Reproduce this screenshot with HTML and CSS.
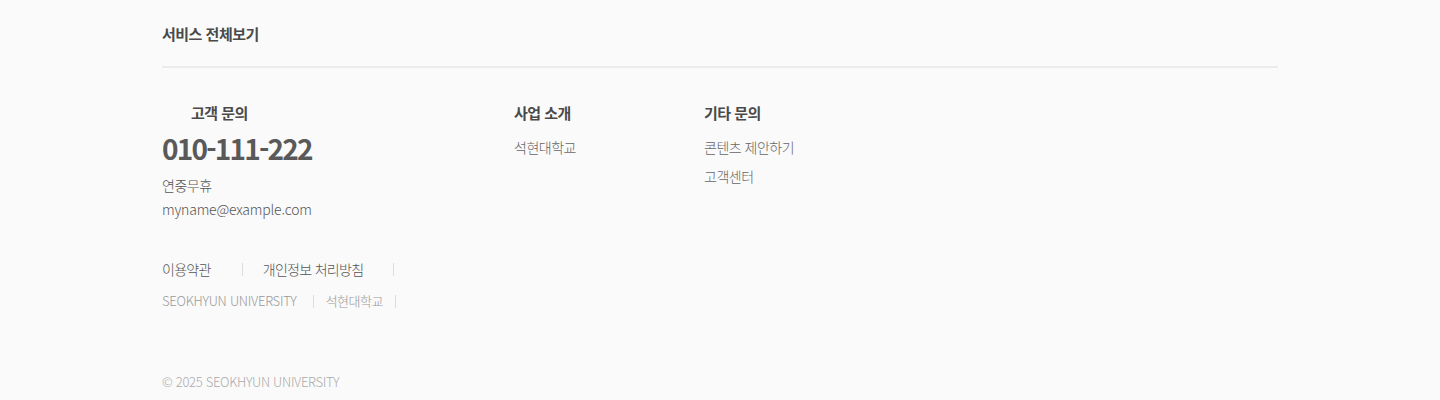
FILE: index.html
```html
<!DOCTYPE html>
<html lang="ko">
<head>
<meta charset="utf-8">
<title>Footer</title>
<link rel="stylesheet" href="styles.css">
</head>
<body>
<footer class="footer">
  <div class="top">
    <h2 class="top-title">서비스 전체보기</h2>
  </div>
  <div class="cols">
    <div class="col col-contact">
      <h3 class="col-title indent">고객 문의</h3>
      <div class="phone">010-111-222</div>
      <p class="info first">연중무휴</p>
      <p class="info email">myname@example.com</p>
    </div>
    <div class="col col-biz">
      <h3 class="col-title">사업 소개</h3>
      <ul class="links">
        <li>석현대학교</li>
      </ul>
    </div>
    <div class="col col-etc">
      <h3 class="col-title">기타 문의</h3>
      <ul class="links">
        <li>콘텐츠 제안하기</li>
        <li>고객센터</li>
      </ul>
    </div>
  </div>
  <ul class="policy">
    <li class="policy-item p1">이용약관</li>
    <li class="policy-item p2">개인정보 처리방침</li>
  </ul>
  <ul class="family">
    <li class="family-item f1">SEOKHYUN UNIVERSITY</li>
    <li class="family-item f2">석현대학교</li>
  </ul>
  <p class="copy">© 2025 SEOKHYUN UNIVERSITY</p>
</footer>
</body>
</html>
```

FILE: styles.css
```css
* { box-sizing: border-box; }
html, body {
  margin: 0;
  padding: 0;
  background: #fafafa;
  font-family: "Noto Sans CJK KR", "Noto Sans", sans-serif;
  color: #666;
  letter-spacing: -0.5px;
  font-weight: 300;
}
ul { list-style: none; margin: 0; padding: 0; }
p, h2, h3 { margin: 0; }

.footer {
  width: 1116px;
  margin: 0 auto;
}

.top {
  padding-top: 24px;
  padding-bottom: 22px;
  border-bottom: 2px solid #ebebeb;
}
.top-title {
  font-size: 15px;
  line-height: 20px;
  font-weight: 700;
  color: #4a4a4a;
}

.cols {
  display: flex;
  margin-top: 35px;
}
.col-contact { width: 352px; }
.col-biz { width: 190px; }

.col-title {
  font-size: 15px;
  line-height: 20px;
  font-weight: 700;
  color: #4a4a4a;
}
.col-title.indent { padding-left: 29px; }

.phone {
  margin-top: 7px;
  font-size: 28px;
  line-height: 36px;
  font-weight: 700;
  color: #595959;
  letter-spacing: -1.8px;
}
.info {
  font-size: 14px;
  line-height: 24px;
  color: #555;
}
.info.first { margin-top: 7px; }
.info.email { letter-spacing: -0.2px; }

.links {
  margin-top: 14px;
  display: flex;
  flex-direction: column;
  gap: 9px;
}
.links li {
  font-size: 14px;
  line-height: 20px;
  color: #666;
}

.policy {
  display: flex;
  align-items: center;
  margin-top: 38px;
}
.policy-item {
  font-size: 14px;
  line-height: 20px;
  color: #555;
  display: flex;
  align-items: center;
  letter-spacing: -0.7px;
}
.policy-item::after {
  content: "";
  display: block;
  width: 1px;
  height: 13px;
  background: #ddd;
}
.policy-item.p1::after { margin-left: 31px; margin-right: 20px; }
.policy-item.p2::after { margin-left: 30px; }

.family {
  display: flex;
  align-items: center;
  margin-top: 12px;
}
.family-item {
  font-size: 13px;
  line-height: 20px;
  color: #999;
  display: flex;
  align-items: center;
}
.family-item.f1 { letter-spacing: -0.25px; }
.family-item::after {
  content: "";
  display: block;
  width: 1px;
  height: 13px;
  background: #ddd;
}
.family-item.f1::after { margin-left: 16px; margin-right: 12px; }
.family-item.f2::after { margin-left: 12px; }

.copy {
  margin-top: 61px;
  font-size: 13px;
  line-height: 20px;
  color: #aaa;
  letter-spacing: -0.3px;
}
```
